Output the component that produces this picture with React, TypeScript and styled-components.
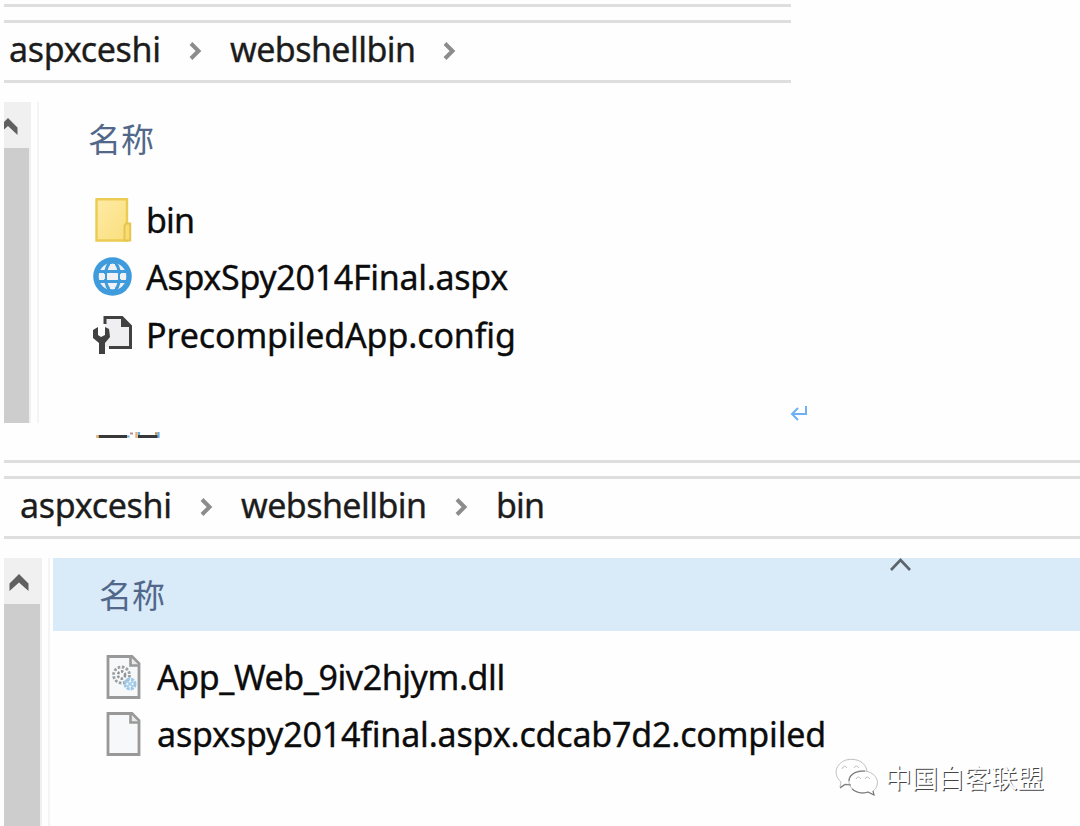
import React from "react";
import styled, { createGlobalStyle } from "styled-components";

const GlobalStyle = createGlobalStyle`
  *, *::before, *::after { box-sizing: border-box; }
  body {
    margin: 0;
    background: #fefefe;
    overflow: hidden;
    font-family: "Noto Sans", "Noto Sans CJK SC", sans-serif;
  }
  svg { display: block; flex: none; }
`;

const Page = styled.main`
  position: relative;
  width: 1080px;
  height: 826px;
  overflow: hidden;
  padding: 4px 0 0 4px;
`;

const Pane = styled.section<{ $width: number; $height: number }>`
  width: ${(p) => p.$width}px;
  height: ${(p) => p.$height}px;
`;

const Gap = styled.div`
  height: 16px;
  border-top: 3px solid #dedede;
`;

const AddressBar = styled.nav<{ $indent: number; $lift: number }>`
  display: flex;
  align-items: center;
  height: 63px;
  padding: 0 0 ${(p) => p.$lift}px ${(p) => p.$indent}px;
  border-top: 3px solid #dedede;
  border-bottom: 3px solid #dedede;
  color: #1c1c1c;
`;

const Label = styled.span<{ $spacing?: number; $width?: number }>`
  flex: none;
  width: ${(p) => (p.$width ? `${p.$width}px` : "auto")};
  font-size: 34px;
  line-height: 44px;
  letter-spacing: ${(p) => p.$spacing ?? 0}px;
  white-space: nowrap;
  -webkit-text-stroke: 0.35px currentColor;
`;

const Arrow = styled.span<{ $width: number }>`
  display: flex;
  flex: none;
  justify-content: center;
  width: ${(p) => p.$width}px;
  padding-top: 4px;
`;

const Body = styled.div<{ $height: number; $top: number }>`
  display: flex;
  height: ${(p) => p.$height}px;
  margin-top: ${(p) => p.$top}px;
`;

const ScrollTrack = styled.div<{ $width: number }>`
  flex: none;
  width: ${(p) => p.$width}px;
  background: #f0f0f0;
`;

const ScrollButton = styled.div<{ $inset: number }>`
  display: flex;
  height: 46px;
  padding: 16px 0 0 ${(p) => p.$inset}px;
  overflow: hidden;
`;

const ScrollThumb = styled.div`
  height: calc(100% - 46px);
  margin-right: 2.5px;
  background: #cdcdcd;
`;

const Divider = styled.div`
  flex: none;
  width: 2px;
  margin-left: 6px;
  background: #f4f4f4;
`;

const List = styled.div<{ $inset: number }>`
  flex: 1;
  min-width: 0;
  margin-left: ${(p) => p.$inset}px;
`;

const Header = styled.div<{ $active?: boolean; $indent: number }>`
  height: 73px;
  padding: 11px 0 0 ${(p) => p.$indent}px;
  background: ${(p) => (p.$active ? "#d9eaf8" : "transparent")};
  color: #52688a;
  font-family: "Noto Sans CJK SC", sans-serif;
  font-size: 33px;
  line-height: 50px;
`;

const Rows = styled.div<{ $indent: number; $top: number }>`
  padding: ${(p) => p.$top}px 0 0 ${(p) => p.$indent}px;
`;

const Row = styled.div`
  display: flex;
  align-items: center;
  height: 57.5px;
  color: #0c0c0c;
`;

const IconCell = styled.span<{ $width: number }>`
  display: flex;
  flex: none;
  width: ${(p) => p.$width}px;
`;

const Between = styled.div`
  height: 36.5px;
  padding: 9px 0 0 92px;
`;

const ReturnMark = styled.div`
  position: absolute;
  left: 790px;
  top: 404px;
`;

const SortMark = styled.div`
  position: absolute;
  left: 889px;
  top: 557px;
`;

const Watermark = styled.div`
  position: absolute;
  left: 834px;
  top: 757px;
  display: flex;
  color: #fff;
  font-family: "Noto Sans CJK SC", sans-serif;
  font-size: 26.5px;
  line-height: 42px;
  text-shadow: 1px 1px 0.5px #444;
`;

const WatermarkText = styled.span`
  margin: -1px 0 0 6px;
  white-space: nowrap;
`;

const Chevron = () => (
  <svg width="14" height="20" viewBox="0 0 14 20">
    <path d="M2 2.5L9.5 10L2 17.5" fill="none" stroke="#8c8c8c" strokeWidth="4" />
  </svg>
);

const UpArrow = () => (
  <svg width="20" height="18" viewBox="0 0 20 18">
    <path d="M10 0L19.5 9.5V17L10 8.5L0.5 17V9.5Z" fill="#606060" />
  </svg>
);

const CutUpArrow = () => (
  <svg width="14" height="18" viewBox="0 0 14 18">
    <path d="M4 0L13.5 9.5V17L4 8L0 11.5V4Z" fill="#606060" />
  </svg>
);

const FolderIcon = () => (
  <svg width="40" height="44" viewBox="0 0 40 44">
    <defs>
      <linearGradient id="folder" x1="0" y1="0" x2="1" y2="1">
        <stop offset="0" stopColor="#ffeaa6" />
        <stop offset="1" stopColor="#f9df7d" />
      </linearGradient>
    </defs>
    <path d="M3.5 1.2H34V42.5H3.5Z" fill="url(#folder)" stroke="#ebcb52" strokeWidth="2.4" />
    <path d="M31.5 42.5V28L33 25.5H37.2V42.5Z" fill="#f8dc78" stroke="#e8c54a" strokeWidth="2" />
  </svg>
);

const GlobeIcon = () => (
  <svg width="40" height="40" viewBox="0 0 40 40">
    <circle cx="19.5" cy="19.5" r="19.3" fill="#3f9bdc" />
    <circle cx="19.5" cy="19.5" r="13.8" fill="#eff1f4" />
    <g fill="none" stroke="#3f9bdc" strokeWidth="3">
      <path d="M5 14.5H34M5 24.5H34" />
      <ellipse cx="19.5" cy="19.5" rx="7.2" ry="14.5" />
    </g>
    <path d="M17 7H22V13H17ZM17 26H22V32H17ZM10 17H29V22H10Z" fill="#eff1f4" />
    <path d="M13 16V23M26 16V23" stroke="#3f9bdc" strokeWidth="2" />
  </svg>
);

const ConfigIcon = () => (
  <svg width="40" height="40" viewBox="0 0 40 40">
    <path d="M12 2H28L37 10V32H12Z" fill="#efeff1" />
    <path d="M12 9V2.5H29L37.5 11V32.5H16" fill="none" stroke="#414141" strokeWidth="3" />
    <path d="M28 1L39 12H28Z" fill="#414141" />
    <path d="M0 15L5 12V20L8 22L12 20V12L16 14L17 22L12 28V39H6V28L0 23Z" fill="#414141" />
  </svg>
);

const FileIcon = ({ gears }: { gears?: boolean }) => (
  <svg width="40" height="44" viewBox="0 0 40 44">
    <path d="M2 1.5H26L33 8.5V42.5H2Z" fill="#f7f8f9" stroke="#999" strokeWidth="2.8" />
    <path d="M24.5 2V10.5H33" fill="#e8e8e8" stroke="#999" strokeWidth="2.6" />
    {gears && (
      <g fill="none">
        <circle cx="15.5" cy="20" r="8" stroke="#9aa0a4" strokeWidth="2.8" strokeDasharray="2.6 1.6" />
        <circle cx="15.5" cy="20" r="3.6" stroke="#8f9498" strokeWidth="2.6" strokeDasharray="2.4 1.6" />
        <circle cx="24" cy="29" r="5" stroke="#9cc8e8" strokeWidth="3" strokeDasharray="3 1" />
        <path d="M21 26L27 32M27 26L21 32" stroke="#a9cfeb" strokeWidth="1.8" />
      </g>
    )}
  </svg>
);

const CutText = () => (
  <svg width="66" height="8" viewBox="0 0 66 8">
    <path d="M2 4.5H31M42 4.5H62" stroke="#383838" strokeWidth="3" />
    <path d="M0 4.5H3M40.5 0V6" stroke="#e5b070" strokeWidth="2.4" />
    <path d="M31 4.5H33.5M62.5 0V6M43 0V3" stroke="#66aee9" strokeWidth="2.2" />
    <path d="M34 1.5H37" stroke="#c98a9c" strokeWidth="2" />
    <path d="M59 1.5H61.5" stroke="#bd8b51" strokeWidth="2.4" />
  </svg>
);

const ReturnIcon = () => (
  <svg width="20" height="18" viewBox="0 0 20 18">
    <path d="M16 2V10H2M8 4L2 10L8 16" fill="none" stroke="#6eb0f3" strokeWidth="2" />
  </svg>
);

const SortIcon = () => (
  <svg width="24" height="16" viewBox="0 0 24 16">
    <path d="M2 13L11.5 3L21 13" fill="none" stroke="#5b646b" strokeWidth="2.6" />
  </svg>
);

const ChatIcon = () => (
  <svg width="45" height="42" viewBox="0 0 45 42">
    <g fill="#fff" stroke="#b0b0b0" strokeWidth="0.8">
      <path d="M17 28L11 27L6 30L7 25C-1 18 1 7 12 3C24 0 33 7 33 15" />
      <path d="M31 14C21 12 14 19 15 26C17 34 25 38 34 35L40 38L39 34C47 28 44 16 31 14Z" />
      <path d="M8 12Q10 7 13 11M20 11Q22 7 25 11M22 22Q24 18 27 22M31 22Q33 18 36 22" fill="none" />
    </g>
    <path d="M6 31L11 27.5L17 28M18 32Q26 38 34 35L40 38L39 34M15 24C15 18 21 14 31 14" fill="none" stroke="#777" strokeWidth="1.1" />
  </svg>
);

interface Entry {
  icon: React.ReactNode;
  name: string;
  spacing: number;
}

const siteFiles: Entry[] = [
  { icon: <FolderIcon />, name: "bin", spacing: -0.9 },
  { icon: <GlobeIcon />, name: "AspxSpy2014Final.aspx", spacing: -0.3 },
  { icon: <ConfigIcon />, name: "PrecompiledApp.config", spacing: -0.12 },
];

const binFiles: Entry[] = [
  { icon: <FileIcon gears />, name: "App_Web_9iv2hjym.dll", spacing: -0.42 },
  { icon: <FileIcon />, name: "aspxspy2014final.aspx.cdcab7d2.compiled", spacing: -0.18 },
];

interface RowsProps {
  entries: Entry[];
  indent: number;
  top: number;
  iconWidth: number;
}

const FileRows = ({ entries, indent, top, iconWidth }: RowsProps) => (
  <Rows $indent={indent} $top={top}>
    {entries.map((e) => (
      <Row key={e.name}>
        <IconCell $width={iconWidth}>{e.icon}</IconCell>
        <Label $spacing={e.spacing}>{e.name}</Label>
      </Row>
    ))}
  </Rows>
);

export default function App() {
  return (
    <Page>
      <GlobalStyle />
      <Pane $width={787} $height={419}>
        <Gap />
        <AddressBar $indent={5} $lift={6}>
          <Label $spacing={-0.3} $width={153}>aspxceshi</Label>
          <Arrow $width={68}><Chevron /></Arrow>
          <Label $spacing={-0.55} $width={186}>webshellbin</Label>
          <Arrow $width={67}><Chevron /></Arrow>
        </AddressBar>
        <Body $height={321} $top={19}>
          <ScrollTrack $width={27}>
            <ScrollButton $inset={0}><CutUpArrow /></ScrollButton>
            <ScrollThumb />
          </ScrollTrack>
          <Divider />
          <List $inset={3}>
            <Header $indent={46}>名称</Header>
            <FileRows entries={siteFiles} indent={51} top={16} iconWidth={53} />
          </List>
        </Body>
      </Pane>
      <Between><CutText /></Between>
      <Pane $width={1076} $height={367}>
        <Gap />
        <AddressBar $indent={16} $lift={4}>
          <Label $spacing={-0.3} $width={153}>aspxceshi</Label>
          <Arrow $width={68}><Chevron /></Arrow>
          <Label $spacing={-0.55} $width={186}>webshellbin</Label>
          <Arrow $width={69}><Chevron /></Arrow>
          <Label $spacing={-0.9}>bin</Label>
        </AddressBar>
        <Body $height={270} $top={19.5}>
          <ScrollTrack $width={38}>
            <ScrollButton $inset={5}><UpArrow /></ScrollButton>
            <ScrollThumb />
          </ScrollTrack>
          <Divider />
          <List $inset={3}>
            <Header $active $indent={46}>名称</Header>
            <FileRows entries={binFiles} indent={53} top={17} iconWidth={51} />
          </List>
        </Body>
      </Pane>
      <ReturnMark><ReturnIcon /></ReturnMark>
      <SortMark><SortIcon /></SortMark>
      <Watermark>
        <ChatIcon />
        <WatermarkText>中国白客联盟</WatermarkText>
      </Watermark>
    </Page>
  );
}
